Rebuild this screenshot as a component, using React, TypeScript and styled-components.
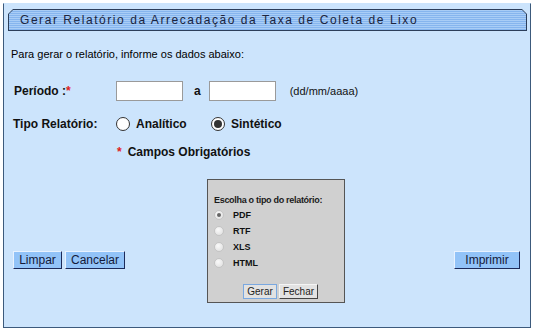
import styled, { createGlobalStyle } from "styled-components";

const GlobalStyle = createGlobalStyle`
  html, body {
    margin: 0;
    padding: 0;
    background: #ffffff;
    font-family: "Liberation Sans", Arial, sans-serif;
  }
`;

const Page = styled.div`
  width: 535px;
  height: 336px;
  padding: 3px 0 0 3px;
  box-sizing: border-box;
  background: #fff;
`;

const Frame = styled.div`
  width: 528px;
  height: 325px;
  box-sizing: border-box;
  background: #cce4fc;
  border: 1px solid #3c5a7c;
  border-top-color: #cce4fc;
  padding: 5px 3px 0 4px;
  display: flex;
  flex-direction: column;
`;

const HeaderOuter = styled.div`
  height: 22px;
  background: #2c3e5a;
  clip-path: polygon(5px 0, calc(100% - 5px) 0, 100% 5px, 100% 100%, 0 100%, 0 5px);
  padding: 1px;
  box-sizing: border-box;
`;

const HeaderInner = styled.div`
  height: 100%;
  background: repeating-linear-gradient(
    to bottom,
    #a9cdf6 0px,
    #a9cdf6 1px,
    #86b5ee 1px,
    #86b5ee 2px
  );
  clip-path: polygon(4px 0, calc(100% - 4px) 0, 100% 4px, 100% 100%, 0 100%, 0 4px);
  display: flex;
  align-items: center;
  padding-left: 11px;
  font-size: 12px;
  letter-spacing: 1.55px;
  color: #1a2440;
`;

const Intro = styled.p`
  margin: 16px 0 0 3px;
  font-size: 11px;
  line-height: 14px;
  color: #000;
`;

const Row = styled.div<{ $top: number }>`
  display: flex;
  align-items: center;
  margin-top: ${(p) => p.$top}px;
  height: 20px;
`;

const Label = styled.span<{ $indent: number }>`
  width: ${(p) => 108 - p.$indent}px;
  margin-left: ${(p) => p.$indent}px;
  font-size: 12px;
  font-weight: bold;
  color: #111;
`;

const Required = styled.span`
  color: #e02020;
`;

const DateInput = styled.input`
  width: 67px;
  height: 20px;
  box-sizing: border-box;
  border: 1px solid #9a9a9a;
  background: #fff;
  margin: 0;
  padding: 0 2px;
`;

const Between = styled.span`
  font-size: 12px;
  font-weight: bold;
  margin: 0 8px 0 11px;
  color: #111;
`;

const Hint = styled.span`
  font-size: 11px;
  color: #111;
  margin-left: 14px;
`;

const RadioOption = styled.label<{ $width?: number }>`
  display: flex;
  align-items: center;
  gap: 6px;
  width: ${(p) => (p.$width ? `${p.$width}px` : "auto")};
  font-size: 12px;
  font-weight: bold;
  color: #111;
`;

const RadioCircle = styled.span<{ $checked?: boolean }>`
  width: 14px;
  height: 14px;
  box-sizing: border-box;
  border-radius: 50%;
  border: 1px solid #333;
  background: #fff;
  display: flex;
  align-items: center;
  justify-content: center;
  &::after {
    content: "";
    width: 8px;
    height: 8px;
    border-radius: 50%;
    background: ${(p) => (p.$checked ? "#333" : "transparent")};
  }
`;

const Note = styled.div`
  margin: 11px 0 0 109px;
  font-size: 12px;
  font-weight: bold;
  color: #111;
  display: flex;
  gap: 6px;
`;

const Bottom = styled.div`
  display: flex;
  align-items: flex-start;
  margin-top: 20px;
  padding-left: 5px;
`;

const ButtonGroup = styled.div`
  display: flex;
  gap: 3px;
  margin-top: 72px;
`;

const ActionButton = styled.button<{ $width: number }>`
  width: ${(p) => p.$width}px;
  height: 18px;
  box-sizing: border-box;
  padding: 0;
  margin: 0;
  background: #92c3f8;
  border: 1px solid;
  border-color: #e8f2ff #1c2a5a #1c2a5a #e8f2ff;
  font-family: "Liberation Sans", Arial, sans-serif;
  font-size: 12px;
  color: #141a3a;
  line-height: 14px;
`;

const PrintButton = styled(ActionButton)`
  margin: 72px 7px 0 auto;
`;

const Dialog = styled.div`
  width: 138px;
  height: 124px;
  box-sizing: border-box;
  margin-left: 82px;
  background: #d0d0d0;
  border: 1px solid #555;
  padding: 14px 0 0 6px;
  display: flex;
  flex-direction: column;
`;

const DialogTitle = styled.div`
  font-size: 9px;
  font-weight: bold;
  color: #1a1a1a;
  line-height: 12px;
  letter-spacing: -0.3px;
`;

const FormatList = styled.div`
  display: flex;
  flex-direction: column;
  gap: 4px;
  margin-top: 3px;
`;

const FormatOption = styled.div`
  display: flex;
  align-items: center;
  gap: 9px;
  height: 12px;
  font-size: 9px;
  font-weight: bold;
  color: #111;
`;

const SmallRadio = styled.span<{ $checked?: boolean }>`
  width: 10px;
  height: 10px;
  box-sizing: border-box;
  border-radius: 50%;
  border: 1px solid #c4c4c4;
  background: radial-gradient(circle at 40% 35%, #fafafa, #dcdcdc);
  display: flex;
  align-items: center;
  justify-content: center;
  &::after {
    content: "";
    width: 4px;
    height: 4px;
    border-radius: 50%;
    background: ${(p) => (p.$checked ? "#666" : "transparent")};
  }
`;

const DialogButtons = styled.div`
  display: flex;
  gap: 2px;
  margin: auto 0 3px 29px;
`;

const SmallButton = styled.button<{ $width: number; $focused?: boolean }>`
  width: ${(p) => p.$width}px;
  height: 15px;
  box-sizing: border-box;
  margin: 0;
  padding: 0;
  background: #e2e2e2;
  border: 1px solid;
  border-color: ${(p) =>
    p.$focused ? "#7aa8e0" : "#f4f4f4 #444 #444 #f4f4f4"};
  font-family: "Liberation Sans", Arial, sans-serif;
  font-size: 10px;
  color: #222;
`;

export default function App() {
  return (
    <>
      <GlobalStyle />
      <Page>
        <Frame>
          <HeaderOuter>
            <HeaderInner>
              Gerar Relatório da Arrecadação da Taxa de Coleta de Lixo
            </HeaderInner>
          </HeaderOuter>
          <Intro>Para gerar o relatório, informe os dados abaixo:</Intro>
          <Row $top={20}>
            <Label $indent={6}>
              Período :<Required>*</Required>
            </Label>
            <DateInput />
            <Between>a</Between>
            <DateInput />
            <Hint>(dd/mm/aaaa)</Hint>
          </Row>
          <Row $top={13}>
            <Label $indent={5}>Tipo Relatório:</Label>
            <RadioOption $width={95}>
              <RadioCircle />
              Analítico
            </RadioOption>
            <RadioOption>
              <RadioCircle $checked />
              Sintético
            </RadioOption>
          </Row>
          <Note>
            <Required>*</Required>
            Campos Obrigatórios
          </Note>
          <Bottom>
            <ButtonGroup>
              <ActionButton $width={49}>Limpar</ActionButton>
              <ActionButton $width={60}>Cancelar</ActionButton>
            </ButtonGroup>
            <Dialog>
              <DialogTitle>Escolha o tipo do relatório:</DialogTitle>
              <FormatList>
                {["PDF", "RTF", "XLS", "HTML"].map((f, i) => (
                  <FormatOption key={f}>
                    <SmallRadio $checked={i === 0} />
                    {f}
                  </FormatOption>
                ))}
              </FormatList>
              <DialogButtons>
                <SmallButton $width={34} $focused>
                  Gerar
                </SmallButton>
                <SmallButton $width={39}>Fechar</SmallButton>
              </DialogButtons>
            </Dialog>
            <PrintButton $width={66}>Imprimir</PrintButton>
          </Bottom>
        </Frame>
      </Page>
    </>
  );
}
